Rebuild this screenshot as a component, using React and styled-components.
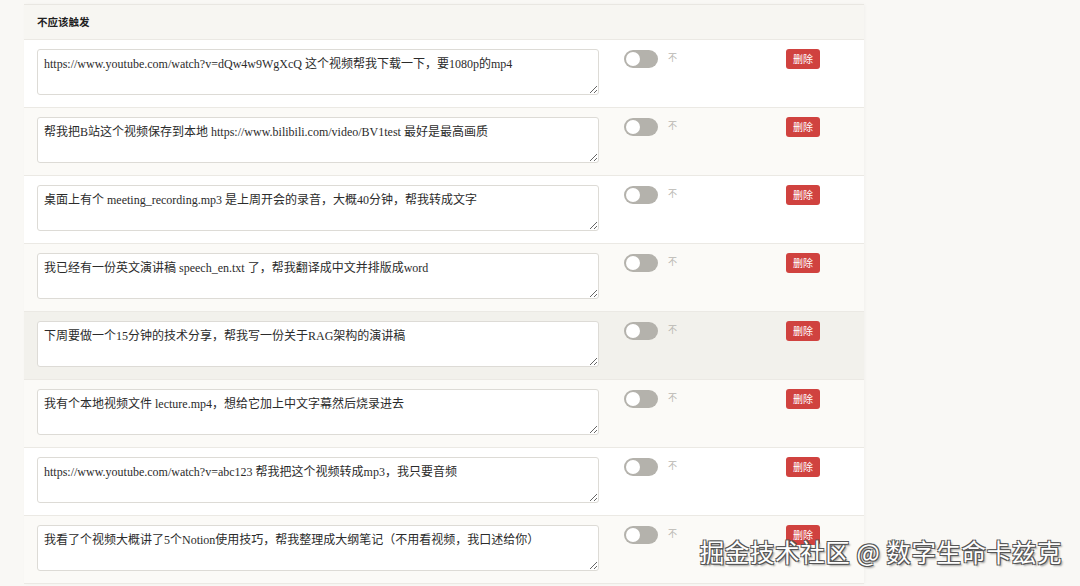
import styled, { createGlobalStyle } from "styled-components";

const GlobalStyle = createGlobalStyle`
  html, body {
    margin: 0;
    padding: 0;
    background: #f9f8f5;
    font-family: "Liberation Serif", "Noto Sans CJK SC", serif;
  }
`;

const cases = [
  "https://www.youtube.com/watch?v=dQw4w9WgXcQ 这个视频帮我下载一下，要1080p的mp4",
  "帮我把B站这个视频保存到本地 https://www.bilibili.com/video/BV1test 最好是最高画质",
  "桌面上有个 meeting_recording.mp3 是上周开会的录音，大概40分钟，帮我转成文字",
  "我已经有一份英文演讲稿 speech_en.txt 了，帮我翻译成中文并排版成word",
  "下周要做一个15分钟的技术分享，帮我写一份关于RAG架构的演讲稿",
  "我有个本地视频文件 lecture.mp4，想给它加上中文字幕然后烧录进去",
  "https://www.youtube.com/watch?v=abc123 帮我把这个视频转成mp3，我只要音频",
  "我看了个视频大概讲了5个Notion使用技巧，帮我整理成大纲笔记（不用看视频，我口述给你）",
];

const Page = styled.div`
  height: 586px;
  overflow: hidden;
  padding: 4px 0 0 24px;
  box-sizing: border-box;
  position: relative;
`;

const Table = styled.div`
  width: 840px;
  border-top: 1px solid #e9e7e2;
  box-shadow: 1px 0 3px rgba(0, 0, 0, 0.03);
`;

const Header = styled.div`
  height: 35px;
  display: flex;
  align-items: center;
  padding-left: 13px;
  padding-bottom: 2px;
  box-sizing: border-box;
  background: #f7f6f2;
  border-bottom: 1px solid #ebe9e4;
  font-family: "Noto Sans CJK SC", sans-serif;
  font-size: 10.5px;
  font-weight: 700;
  color: #222;
`;

const Row = styled.div`
  display: flex;
  align-items: flex-start;
  height: 68px;
  box-sizing: border-box;
  padding: 9px 13px 0 13px;
  border-bottom: 1px solid #ebe9e4;
  background: ${(p) => (p.$hover ? "#f2f1ec" : p.$alt ? "#fbfaf7" : "#ffffff")};
`;

const Prompt = styled.textarea`
  width: 562px;
  height: 46px;
  box-sizing: border-box;
  margin: 0;
  padding: 7px 6px;
  border: 1px solid #dddbd6;
  border-radius: 3px;
  background: #fff;
  font-family: "Liberation Serif", "Noto Sans CJK SC", serif;
  font-size: 12px;
  line-height: 15px;
  color: #2b2b2b;
  outline: none;
`;

const SwitchCell = styled.div`
  display: flex;
  align-items: flex-start;
  gap: 10px;
  width: 162px;
  margin-left: 25px;
  padding-top: 1px;
`;

const Switch = styled.div`
  width: 34px;
  height: 18px;
  border-radius: 9px;
  background: #b4b2ac;
  position: relative;
  flex-shrink: 0;
`;

const Knob = styled.span`
  position: absolute;
  left: 2px;
  top: 2px;
  width: 14px;
  height: 14px;
  border-radius: 50%;
  background: #fff;
`;

const SwitchLabel = styled.span`
  font-family: "Noto Sans CJK SC", sans-serif;
  font-size: 9px;
  color: #b9b7b2;
  line-height: 16px;
`;

const DeleteButton = styled.button`
  height: 20px;
  padding: 0 7px;
  border: none;
  border-radius: 3px;
  background: #d0423f;
  color: #fff;
  font-family: "Noto Sans CJK SC", sans-serif;
  font-size: 10px;
  line-height: 20px;
  cursor: pointer;
`;

const Watermark = styled.div`
  position: absolute;
  right: 18px;
  bottom: 17px;
  font-family: "Noto Sans CJK SC", sans-serif;
  font-size: 24.5px;
  color: #fff;
  letter-spacing: 0.6px;
  text-shadow: 1px 1px 0 #555, -1px -1px 0 #555, 1px -1px 0 #555, -1px 1px 0 #555,
    2px 2px 2px rgba(0, 0, 0, 0.4);
`;

export default function App() {
  return (
    <>
      <GlobalStyle />
      <Page>
        <Table>
          <Header>不应该触发</Header>
          {cases.map((text, i) => (
            <Row key={i} $alt={i % 2 === 1} $hover={i === 4}>
              <Prompt defaultValue={text} />
              <SwitchCell>
                <Switch>
                  <Knob />
                </Switch>
                <SwitchLabel>不</SwitchLabel>
              </SwitchCell>
              <DeleteButton>删除</DeleteButton>
            </Row>
          ))}
        </Table>
        <Watermark>掘金技术社区 @ 数字生命卡兹克</Watermark>
      </Page>
    </>
  );
}
